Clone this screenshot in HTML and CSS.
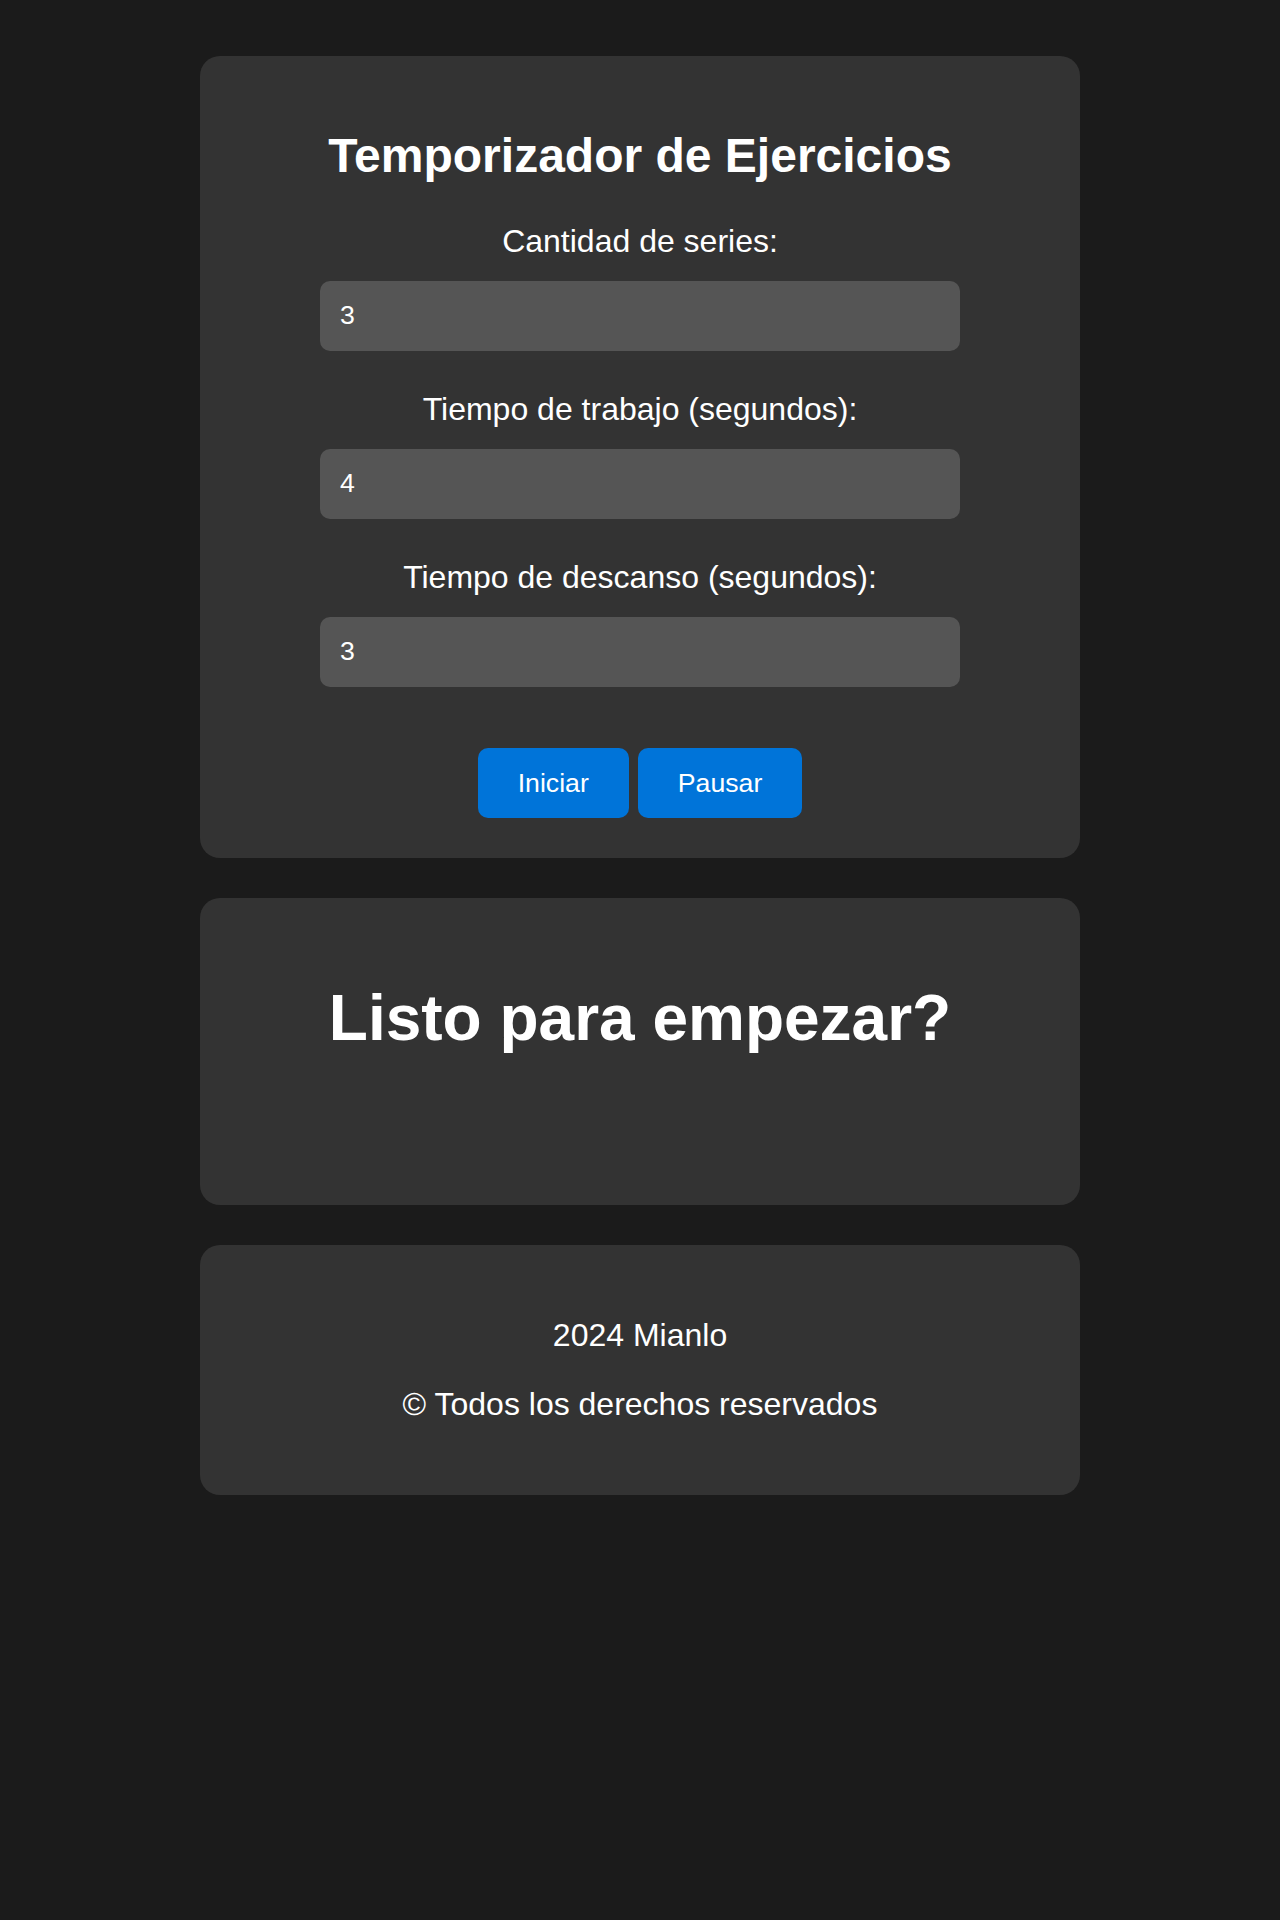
FILE: index.html
```html
<!DOCTYPE html>
<html lang="es">
<head>
<meta charset="utf-8">
<title>Temporizador de Ejercicios</title>
<link rel="stylesheet" href="styles.css">
</head>
<body>
<main class="page">
  <section class="card setup">
    <h1 class="title">Temporizador de Ejercicios</h1>
    <label class="field-label" for="series">Cantidad de series:</label>
    <input class="field" id="series" type="number" value="3">
    <label class="field-label" for="trabajo">Tiempo de trabajo (segundos):</label>
    <input class="field" id="trabajo" type="number" value="4">
    <label class="field-label" for="descanso">Tiempo de descanso (segundos):</label>
    <input class="field" id="descanso" type="number" value="3">
    <div class="actions">
      <button class="btn" type="button">Iniciar</button>
      <button class="btn" type="button">Pausar</button>
    </div>
  </section>
  <section class="card status">
    <h1 class="status-title">Listo para empezar?</h1>
    <div class="timer"></div>
  </section>
  <footer class="card footer">
    <p class="footer-line">2024 Mianlo</p>
    <p class="footer-line">© Todos los derechos reservados</p>
  </footer>
</main>
</body>
</html>
```

FILE: styles.css
```css
html, body {
  margin: 0;
  padding: 0;
  background: #1b1b1b;
}

body {
  font-family: "Liberation Sans", Arial, sans-serif;
  color: #ffffff;
}

.page {
  width: 880px;
  margin: 56px auto 0;
  display: flex;
  flex-direction: column;
  gap: 40px;
}

.card {
  background: #333333;
  border-radius: 20px;
  padding: 40px;
  box-sizing: border-box;
  text-align: center;
}

.setup {
  display: flex;
  flex-direction: column;
  align-items: center;
}

.title {
  font-size: 48px;
  font-weight: bold;
  line-height: 55px;
  margin: 32px 0 40px;
}

.field-label {
  display: block;
  font-size: 32px;
  line-height: 37px;
  margin: 0 0 21px;
}

.field {
  display: block;
  width: 640px;
  height: 70px;
  box-sizing: border-box;
  padding: 0 20px 2px;
  margin: 0 0 40px;
  border: none;
  border-radius: 10px;
  background: #555555;
  color: #ffffff;
  font-family: "Liberation Sans", Arial, sans-serif;
  font-size: 26.67px;
  outline: none;
  -moz-appearance: textfield;
  appearance: textfield;
}

.field::-webkit-outer-spin-button,
.field::-webkit-inner-spin-button {
  -webkit-appearance: none;
  margin: 0;
}

.field:last-of-type {
  margin-bottom: 0;
}

.actions {
  display: flex;
  justify-content: center;
  gap: 9px;
  margin-top: 61px;
}

.btn {
  height: 70px;
  padding: 0 40px;
  border: none;
  border-radius: 10px;
  background: #0074d9;
  color: #ffffff;
  font-family: "Liberation Sans", Arial, sans-serif;
  font-size: 26.67px;
  cursor: pointer;
}

.status-title {
  font-size: 64px;
  font-weight: bold;
  margin: 43px 0;
}

.timer {
  height: 67px;
}

.footer-line {
  font-size: 32px;
  margin: 32px 0;
}
```
